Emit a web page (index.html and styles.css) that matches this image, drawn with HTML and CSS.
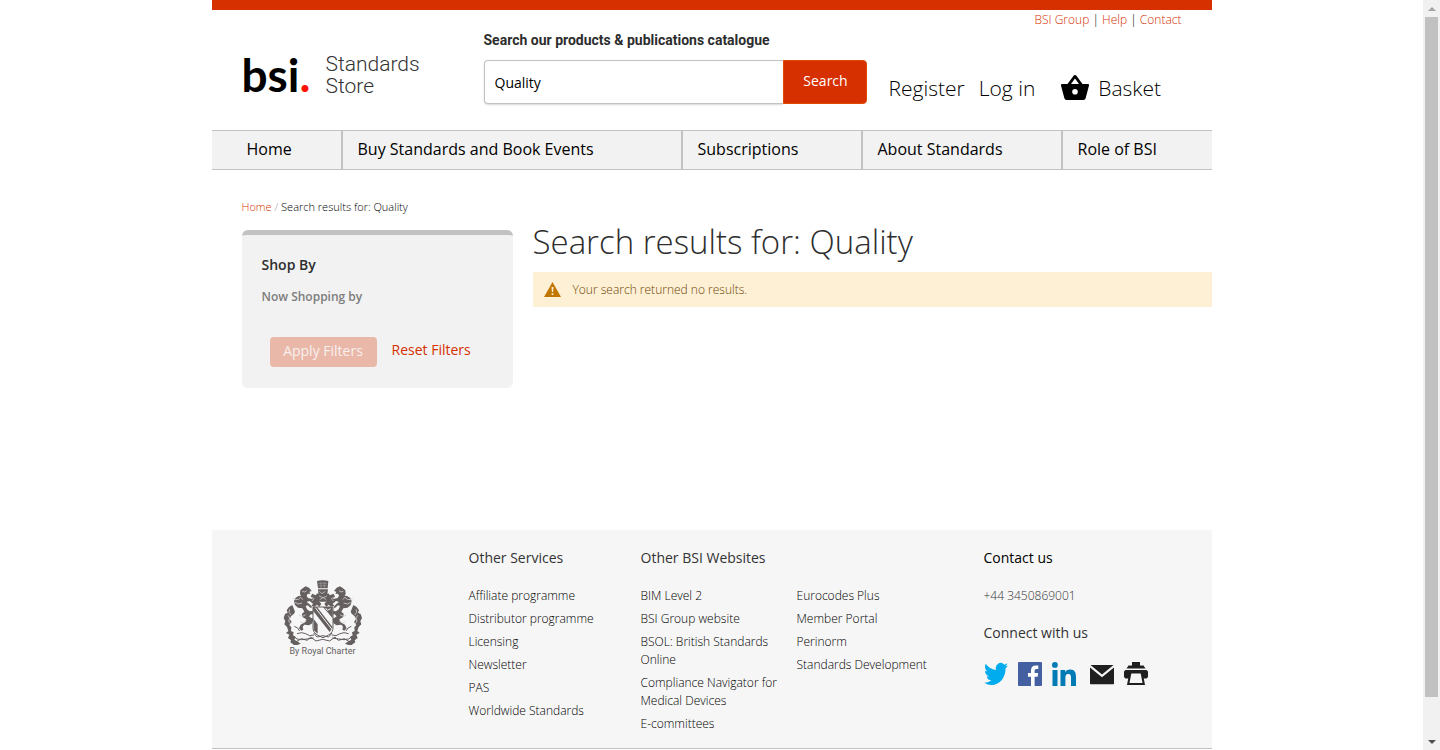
FILE: index.html
```html
<!DOCTYPE html>
<html lang="en">
<head>
<meta charset="utf-8">
<meta name="viewport" content="width=device-width, initial-scale=1">
<title>Search results for: Quality</title>
<link rel="stylesheet" href="styles.css">
</head>
<body>
<div class="viewport">
  <div class="page">
    <header class="header">
      <nav class="top-links" aria-label="Utility">
        <a href="#">BSI Group</a> | <a href="#">Help</a> | <a href="#">Contact</a>
      </nav>
      <div class="header-main">
        <a class="logo" href="#">
          <span class="logo-mark">bsi<span class="logo-dot">.</span></span>
          <span class="logo-name"><span>Standards</span><span>Store</span></span>
        </a>
        <form class="search">
          <label class="search-label" for="q">Search our products &amp; publications catalogue</label>
          <div class="search-row">
            <input class="search-input" id="q" type="text" value="Quality">
            <button class="search-button" type="submit">Search</button>
          </div>
        </form>
        <nav class="account" aria-label="Account">
          <a href="#">Register</a>
          <a href="#">Log in</a>
          <a class="basket" href="#">
            <svg class="basket-icon" viewBox="0 0 28 25" aria-hidden="true"><path fill-rule="evenodd" d="M14 0c.7 0 1.200.3 1.600.9L21.500 9H27c.8 0 1.300.7 1 1.500L24.700 23c-.3 1.200-1.200 2-2.400 2H5.700c-1.200 0-2.100-.8-2.400-2L0 10.500C-.2 9.700.2 9 1 9h5.500L12.400.9C12.800.3 13.300 0 14 0zm0 3.500L10 9h8zM14 14a2.800 2.800 0 1 0 0 5.600 2.800 2.800 0 0 0 0-5.600z"/></svg>
            Basket
          </a>
        </nav>
      </div>
    </header>

    <nav class="menu" aria-label="Main">
      <a href="#">Home</a>
      <a href="#">Buy Standards and Book Events</a>
      <a href="#">Subscriptions</a>
      <a href="#">About Standards</a>
      <a href="#">Role of BSI</a>
    </nav>

    <div class="breadcrumbs"><a href="#">Home</a> <span>/</span> Search results for: Quality</div>

    <div class="content">
      <aside class="filters">
        <h2>Shop By</h2>
        <h3>Now Shopping by</h3>
        <div class="filter-actions">
          <button class="apply" type="button" disabled>Apply Filters</button>
          <a href="#">Reset Filters</a>
        </div>
      </aside>
      <main class="results">
        <h1>Search results for: Quality</h1>
        <div class="notice">
          <svg class="notice-icon" viewBox="0 0 17 15" aria-hidden="true"><path fill="#c07600" d="M8.500 0 17 15H0z"/><path fill="#fdf0d5" d="M7.500 5h2l-.4 5H7.900zM7.600 11.300h1.800v1.700H7.600z"/></svg>
          Your search returned no results.
        </div>
      </main>
    </div>

    <footer class="footer">
      <div class="charter">
        <svg class="crest" viewBox="40 28 240 198" aria-hidden="true">
          <defs>
            <g id="supporter">
              <path d="M92 62l8-7 8-5 10 4 8 10-7 2 3 7-8-1-3 6 4 7 10 2 8 5-2 4-12-2-8 3 8 6 8 8-3 5-10-9-6 2 4 10 8 6 13-2 8 4-3 6-14 1-6 6 8 6 11-1 8 5-2 6-13-1-4 7-8 5-14-2-5 6 2 9-6 3-7-7 5-11 13-7 4-9-12-7-1-10 7-6-6-10-13-2-9-8-3-12 5-10 9-5 7-1-3-5z"/>
              <path d="M68 106l-10 6-7 10 3 7-8 4-4 12 5 10-3 9 8 8 4 12-7 6 10 5-4 10 9 7-2 6 11 8 7 7 3-7 10-4-8-6-11-6 4-8-8-5 2-9-8-4 1-11-6-7 7-9-6-9 4-8 9-8 3-6z"/>
              <path d="M82 192l14-3 12 3 12 6 13-2M72 200l10 8 14 2 16-2 20-3M74 170l10 5 6 9" fill="none" stroke="currentColor" stroke-width="3"/>
              <path d="M70 86l8 4 8-1 7-6 7 7M76 98l9 5 12-3M98 65l7 2 6-4M89 137l10 3 9-5M92 157l9 2 9-5M55 137l5 8-3 9 6 9M60 119l-2 9 6 8" fill="none" stroke="#d2cfcf" stroke-width="2.500"/>
              <path d="M128 72l-5 8 6 8-8 7 9 7-5 7 10 2 7-6 7 6 6-8-7-9 7-6-8-5 5-8-9-4-5 6z"/>
            </g>
          </defs>
          <g fill="currentColor">
            <use href="#supporter"/>
            <use href="#supporter" transform="matrix(-1 0 0 1 319 0)"/>
          </g>
          <path fill="currentColor" d="M142 34q16-5 34 0l-2 22h-29zM145 59h30l-3 20 7 7-10 10h-19l-10-10 7-7z"/>
          <path fill="none" stroke="#a09b9b" stroke-width="2" d="M146 41h26M149 48h22M154 37v18M164 37v18"/>
          <path fill="none" stroke="#dedbdb" stroke-width="2" d="M149 65l8 7 10-7M148 79l12 5 12-5M150 90l10-6 10 6M125 82l8 5-6 7M193 82l-8 5 6 7"/>
          <path fill="#f6f6f6" stroke="currentColor" stroke-width="3" d="M130 112h60v62c0 18-14 23-30 30-16-7-30-12-30-30z"/>
          <path fill="currentColor" d="M130 112h12l47 61-9 14-50-64zM160 112h29v34zM132 148l12 16v28l-12-11z"/>
          <path fill="none" stroke="#f6f6f6" stroke-width="3" d="M137 114l49 64M168 115l5 7 10-5"/>
          <path fill="none" stroke="currentColor" stroke-width="3" d="M80 216l15-9 18 5 10-10 16 12 20-5 21 5 16-12 10 10 18-5 15 9M132 190l10 12 18-4 17 4 10-12"/>
        </svg>
        <p>By Royal Charter</p>
      </div>
      <section>
        <h4>Other Services</h4>
        <ul>
          <li><a href="#">Affiliate programme</a></li>
          <li><a href="#">Distributor programme</a></li>
          <li><a href="#">Licensing</a></li>
          <li><a href="#">Newsletter</a></li>
          <li><a href="#">PAS</a></li>
          <li><a href="#">Worldwide Standards</a></li>
        </ul>
      </section>
      <section class="websites">
        <h4>Other BSI Websites</h4>
        <div class="website-lists">
          <ul>
            <li><a href="#">BIM Level 2</a></li>
            <li><a href="#">BSI Group website</a></li>
            <li><a href="#">BSOL: British Standards Online</a></li>
            <li><a href="#">Compliance Navigator for Medical Devices</a></li>
            <li><a href="#">E-committees</a></li>
          </ul>
          <ul>
            <li><a href="#">Eurocodes Plus</a></li>
            <li><a href="#">Member Portal</a></li>
            <li><a href="#">Perinorm</a></li>
            <li><a href="#">Standards Development</a></li>
          </ul>
        </div>
      </section>
      <section>
        <h4><a href="#">Contact us</a></h4>
        <p class="phone">+44 3450869001</p>
        <h4 class="connect">Connect with us</h4>
        <div class="social">
          <a href="#" aria-label="Twitter"><svg viewBox="0 1.500 24 21" preserveAspectRatio="none"><path fill="#00aced" d="M24 4.600a10 10 0 0 1-2.800.8 4.900 4.900 0 0 0 2.200-2.700c-1 .6-2 1-3.100 1.200a4.900 4.900 0 0 0-8.400 4.500A14 14 0 0 1 1.700 3.100a4.900 4.900 0 0 0 1.500 6.600 4.900 4.900 0 0 1-2.200-.6c0 2.300 1.600 4.400 3.900 4.900a5 5 0 0 1-2.200.1 4.900 4.900 0 0 0 4.600 3.400A9.900 9.900 0 0 1 0 19.500 14 14 0 0 0 7.500 21.700c9.100 0 14.300-7.700 14-14.600A10 10 0 0 0 24 4.600z"/></svg></a>
          <a href="#" aria-label="Facebook"><svg viewBox="0 0 24 24"><rect width="24" height="24" rx="1" fill="#4460a0"/><path fill="#fff" d="M13 24v-9.300h-3V11h3V8.400c0-3.200 1.800-4.900 4.700-4.900 1.300 0 2.300.1 2.600.1v3.300h-1.900c-1.400 0-1.800.8-1.800 1.800V11h3.500l-.5 3.700h-3V24z"/></svg></a>
          <a href="#" aria-label="LinkedIn"><svg viewBox="0 0 24 24"><circle cx="2.900" cy="2.900" r="2.900" fill="#007bb6"/><path fill="#007bb6" d="M.5 8h5v16h-5zM8.500 8h4.700v2.200c.7-1.300 2.300-2.600 4.800-2.600 5 0 6 3.300 6 7.600V24h-5v-7.800c0-1.900 0-4.200-2.600-4.200s-3 2-3 4.100V24H8.500z"/></svg></a>
          <a class="mail" href="#" aria-label="Email"><svg viewBox="0 0 24 24"><path fill="#1f1f1f" d="M.5 3h23L12 12.500zM0 5.500l12 9.700 12-9.700V21.500q0 .8-.8.8H.8q-.8 0-.8-.8z"/></svg></a>
          <a href="#" aria-label="Print"><svg viewBox="0 0 24 24"><path fill="#1f1f1f" fill-rule="evenodd" d="M8 0h8v3.500h3.500l2 3H2.500l2-3H8zM1.500 8h21L24 9.500V15l-1.500 1.500h-2.700L21 23H3l1.200-6.500H1.500L0 15V9.500zm5.800 3.500L5.500 21h13l-1.800-9.500z"/></svg></a>
        </div>
      </section>
    </footer>
  </div>
  <div class="scrollbar" aria-hidden="true">
    <span class="arrow arrow-up"></span>
    <span class="thumb"></span>
    <span class="arrow arrow-down"></span>
  </div>
</div>
</body>
</html>
```

FILE: styles.css
```css
* { box-sizing: border-box; }

body {
  margin: 0;
  background: #fff;
  color: #000;
  font-family: "Open Sans", "Noto Sans", sans-serif;
  font-size: 12px;
  font-weight: 300;
  line-height: 18px;
}

h1, h2, h3, h4, p, ul { margin: 0; padding: 0; }
ul { list-style: none; }
a { color: #d62f00; text-decoration: none; }
svg { display: block; }

.viewport {
  display: grid;
  grid-template-columns: minmax(0, 1fr) 17px;
}

.page {
  width: 100%;
  max-width: 1000px;
  margin: 0 auto;
}

/* Header */
.header {
  border-top: 10px solid #d62f00;
  padding: 0 30px 26px;
}
.top-links {
  line-height: 20px;
  text-align: right;
}
.header-main {
  display: grid;
  grid-template-columns: 242px 383px 1fr;
}
.logo {
  display: flex;
  gap: 14px;
  align-items: center;
  padding-top: 16px;
}
.logo-mark {
  width: 70px;
  color: #000;
  font-family: Lato, sans-serif;
  font-size: 46px;
  font-weight: 700;
  line-height: 48px;
}
.logo-dot { color: #f10; }
.logo-name {
  display: flex;
  flex-direction: column;
  color: #333;
  font-family: Roboto, sans-serif;
  font-size: 21px;
  font-weight: 300;
  line-height: 22px;
}
.search-label {
  display: block;
  margin-bottom: 10px;
  color: #2d2d2d;
  font-family: Roboto, sans-serif;
  font-size: 14px;
  font-weight: 700;
  line-height: 20px;
}
.search-row { display: flex; }
.search-input {
  flex: 1;
  min-width: 0;
  height: 44px;
  padding: 0 10px;
  border: 1px solid #c2c2c2;
  border-right: 0;
  border-radius: 4px 0 0 4px;
  box-shadow: 0 1px 2px rgba(0, 0, 0, .15);
  font: 14px "Open Sans", sans-serif;
}
.search-button {
  width: 84px;
  padding: 0 0 4px 2px;
  border: 1px solid #e04a00;
  border-radius: 0 4px 4px 0;
  background: #d62f00;
  color: #fff;
  font: 14px "Open Sans", sans-serif;
}
.account {
  display: flex;
  align-items: center;
  gap: 14px;
  padding: 41px 0 0 22px;
  font-size: 21px;
  line-height: 28px;
  white-space: nowrap;
}
.account a { color: #000; }
.account .basket {
  display: flex;
  align-items: center;
  gap: 9px;
  margin-left: 12px;
}
.basket-icon { width: 28px; height: 25px; }

/* Main menu */
.menu {
  display: grid;
  grid-template-columns: 129fr 340fr 180fr 200fr 151fr;
  border: solid #c2c2c2;
  border-width: 1px 0;
  background: #f2f2f2;
  font-size: 16px;
  font-weight: 400;
}
.menu a {
  padding: 0 0 2px 15px;
  line-height: 36px;
  border-left: 2px solid #c2c2c2;
  color: #000;
}
.menu a:first-child {
  padding-left: 35px;
  border-left: 0;
}

.breadcrumbs {
  padding: 28px 30px 14px;
  font-size: 11px;
}
.breadcrumbs span { color: #a3a3a3; }

/* Results */
.content {
  display: grid;
  grid-template-columns: 271px minmax(0, 1fr);
  gap: 20px;
  align-items: start;
  min-height: 300px;
  padding-left: 30px;
}
.filters {
  padding: 20px 20px 21px;
  border-top: 5px solid #c2c2c2;
  border-radius: 6px;
  background: #f2f2f2;
}
.filters h2 {
  color: #2d2d2d;
  font-size: 14px;
  font-weight: 600;
  line-height: 20px;
}
.filters h3 {
  margin: 12px 0 30px;
  color: #7d7d7d;
  font-size: 12px;
  font-weight: 600;
  line-height: 20px;
}
.filter-actions {
  display: flex;
  gap: 15px;
  padding-left: 8px;
  font-size: 14px;
  font-weight: 400;
  line-height: 26px;
}
.apply {
  width: 107px;
  height: 30px;
  padding: 0 0 4px;
  border: 0;
  border-radius: 4px;
  background: #eab8a9;
  color: #f8f0ee;
  font: 14px "Open Sans", sans-serif;
}
.results h1 {
  margin-bottom: 18px;
  color: #2d2d2d;
  font-size: 33px;
  font-weight: 300;
  line-height: 24px;
}
.notice {
  display: flex;
  align-items: center;
  gap: 12px;
  min-height: 35px;
  padding: 0 11px;
  background: #fdf0d5;
  color: #6f4400;
}
.notice-icon { width: 17px; height: 15px; }

/* Footer */
.footer {
  display: grid;
  grid-template-columns: 257fr 172fr 343fr 228fr;
  padding: 18px 0 15px;
  border-bottom: 1px solid #c2c2c2;
  background: #f6f6f6;
}
.footer h4 {
  color: #333;
  font-size: 14px;
  font-weight: 400;
  line-height: 20px;
}
.footer h4 a, .footer li a { color: #000; }
.footer ul {
  display: flex;
  flex-direction: column;
  gap: 5px;
  padding-top: 19px;
}
.website-lists {
  display: grid;
  grid-template-columns: 140fr 187fr;
  gap: 16px;
}
.charter {
  display: flex;
  flex-direction: column;
  align-items: center;
  padding: 31px 35px 0 0;
  color: #655f5f;
  font-family: Roboto, sans-serif;
  font-size: 9px;
  font-weight: 400;
}
.crest {
  width: 80px;
  height: 66px;
}
.charter p { line-height: 12px; }
.phone {
  padding-top: 19px;
  color: #333;
}
.footer .connect { padding-top: 18px; }
.social {
  display: flex;
  gap: 10px;
  padding-top: 19px;
}
.social svg { width: 24px; height: 24px; }
.social .mail { margin-left: 4px; }

/* Scrollbar */
.scrollbar {
  position: sticky;
  top: 0;
  display: grid;
  grid-template-rows: 17px 680fr 36fr 17px;
  height: 100vh;
  background: #f1f1f1;
}
.arrow {
  place-self: center;
  border: 4px solid transparent;
}
.arrow-up {
  border-top: 0;
  border-bottom-color: #a3a3a3;
}
.arrow-down {
  grid-row: 4;
  border-bottom: 0;
  border-top-color: #505050;
}
.thumb {
  margin: 0 2px;
  background: #c1c1c1;
}
```
